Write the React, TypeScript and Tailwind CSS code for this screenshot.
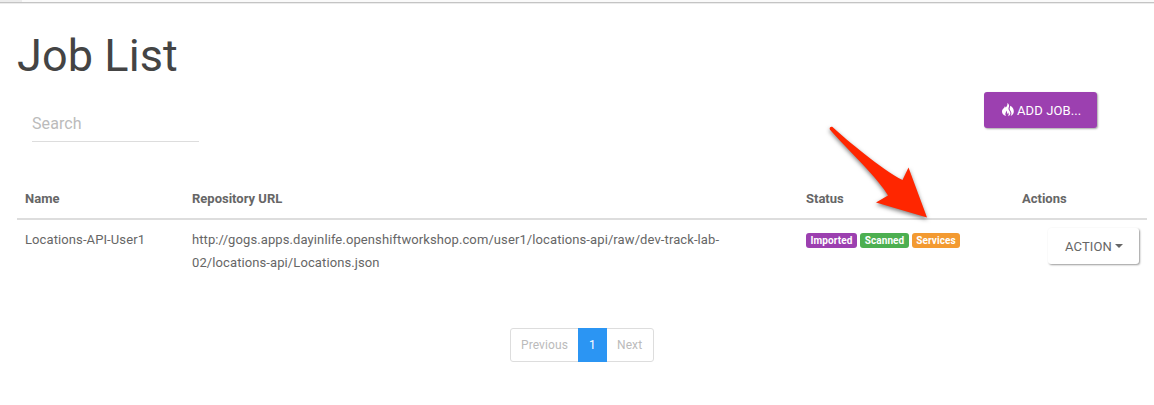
const columns = ['Name', 'Repository URL', 'Status', 'Actions'];

const badges = [
  { label: 'Imported', className: 'w-[51px] bg-[#9c40b0]' },
  { label: 'Scanned', className: 'w-[49px] bg-[#4caf50]' },
  { label: 'Services', className: 'w-[48px] bg-[#f39a31]' },
];

function FireIcon() {
  return (
    <svg width="12" height="14" viewBox="0 0 12 14" fill="currentColor" aria-hidden="true">
      <path d="M5.4 0C5.7 2 5 3.1 3.8 4.4C3.5 3.9 3.2 3.6 2.7 3.3C2.9 5 .1 5.8 0 8.4C0 10.4 1.3 12 4 13C3.2 11.6 3.2 10.5 3.8 9.4C4.2 8.8 4.6 8.3 4.5 7.5C5.3 8.4 5.2 9.8 4.8 11C5.5 10.8 6 10.3 6.2 9.6C6.9 11 6.8 12.1 6 13.2C7.3 12.8 8.3 11.9 8.4 10.6C8.5 9.2 7.6 8.1 6.9 7C5.9 5.5 7 4.1 7.1 3C7.2 1.7 6.3.7 5.4 0Z" />
      <path d="M8.1 2.8C10.7 4 12 6.2 11.8 8.8C11.7 10.7 10.6 12.3 8.5 13.1C9.3 11.8 9.6 10.8 9.3 9.5C9 8.2 7.5 7 7.6 5.6C7.7 4.7 8.3 4.1 8.1 2.8Z" />
    </svg>
  );
}

function Arrow() {
  return (
    <svg
      className="pointer-events-none absolute left-[820px] top-[118px] drop-shadow-[0_2px_2px_rgba(0,0,0,0.5)]"
      width="120"
      height="110"
      viewBox="820 118 120 110"
      aria-hidden="true"
    >
      <path
        d="M832.8 127.2C848 141 880 168 902.5 180L908.5 167.5L927 217.5L876 202.5L888 195.5C880 180 847 149 830 129.7C828.8 127.6 831 125.8 832.8 127.2Z"
        fill="#ff2600"
      />
    </svg>
  );
}

export default function App() {
  return (
    <div className="relative flex h-[405px] w-[1154px] flex-col overflow-hidden bg-white font-['Roboto',sans-serif] text-[13px] leading-[23px] tracking-[0.1px] text-[#666]">
      <div className="h-1 border-b border-[#ececec]">
        <div className="h-[3px] border-b border-[#c4c4c4] bg-[#fafafa]">
          <div className="h-[2px] w-[22px] bg-[#ececec]" />
        </div>
      </div>

      <header className="h-[88px] pl-[17px] pt-[27px]">
        <h1 className="text-[45px] font-normal leading-[50px] tracking-[0.1px] text-[#444]">Job List</h1>
      </header>

      <div className="flex h-[87px] items-start justify-between pl-8 pr-[57px]">
        <input
          placeholder="Search"
          className="mt-[13px] h-[37px] w-[167px] border-b border-[#ddd] text-base tracking-[0.1px] outline-none placeholder:text-[#bbb]"
        />
        <button className="flex h-9 w-[113px] items-center rounded-[3px] bg-[#9c40b0] pl-[18px] text-[13px] tracking-[0.1px] text-white shadow-[1px_1px_2px_rgba(0,0,0,0.35)]">
          <FireIcon />
          <span className="ml-[3px] mt-px">ADD JOB...</span>
        </button>
      </div>

      <table className="ml-[17px] w-[1130px] table-fixed border-collapse text-left">
        <colgroup>
          <col className="w-[167px]" />
          <col className="w-[614px]" />
          <col className="w-[216px]" />
          <col className="w-[133px]" />
        </colgroup>
        <thead>
          <tr className="border-b-2 border-[#ddd]">
            {columns.map((column) => (
              <th key={column} className="px-2 pb-2 pt-2 font-bold tracking-[0px]">
                {column}
              </th>
            ))}
          </tr>
        </thead>
        <tbody>
          <tr className="align-top">
            <td className="px-2 pt-2">Locations-API-User1</td>
            <td className="px-2 pt-2">
              http://gogs.apps.dayinlife.openshiftworkshop.com/user1/locations-api/raw/dev-track-lab-
              <br />
              02/locations-api/Locations.json
            </td>
            <td className="px-2 pt-[13px]">
              <div className="flex gap-[3px]">
                {badges.map(({ label, className }) => (
                  <span
                    key={label}
                    className={`flex h-[15px] items-center justify-center rounded-[3px] text-[10px] font-bold leading-none tracking-[0.1px] text-white ${className}`}
                  >
                    {label}
                  </span>
                ))}
              </div>
            </td>
            <td className="pt-2">
              <button className="ml-[34px] flex h-9 w-[91px] items-center rounded-[3px] bg-white pl-[17px] text-[13px] tracking-[0.1px] shadow-[1px_1px_2px_rgba(0,0,0,0.4)]">
                ACTION
                <span className="ml-[3px] border-x-4 border-t-4 border-x-transparent border-t-[#666]" />
              </button>
            </td>
          </tr>
        </tbody>
      </table>

      <nav className="ml-[510px] mt-[54px] flex h-[34px] w-[144px] rounded-[3px] border border-[#ddd] text-xs text-[#bbb]">
        <span className="flex w-[67px] items-center pl-[10px]">Previous</span>
        <span className="-my-px flex w-[29px] items-center justify-center bg-[#2b95f3] text-white">1</span>
        <span className="flex items-center pl-[10px]">Next</span>
      </nav>

      <Arrow />
    </div>
  );
}
